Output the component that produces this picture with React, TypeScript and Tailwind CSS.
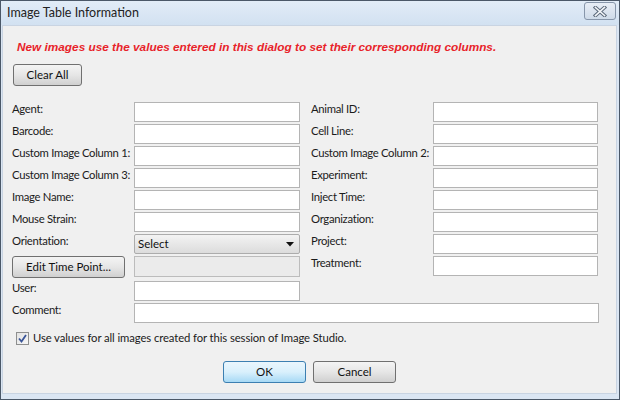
import React from 'react';

const ui = { fontFamily: 'Lato, "Noto Sans", sans-serif' };

const leftRows = [
  'Agent:',
  'Barcode:',
  'Custom Image Column 1:',
  'Custom Image Column 3:',
  'Image Name:',
  'Mouse Strain:',
];

const rightRows = [
  'Animal ID:',
  'Cell Line:',
  'Custom Image Column 2:',
  'Experiment:',
  'Inject Time:',
  'Organization:',
  'Project:',
  'Treatment:',
];

const TextBox = ({ w = 'w-[166px]' }: { w?: string }) => (
  <div className={`${w} h-[20px] bg-white border border-[#b4b4b4]`} />
);

const Label = ({ text }: { text: string }) => (
  <div className="w-[122px] h-[20px] text-[11.3px] tracking-[-0.3px] leading-[14px] text-[#1b1b1b] whitespace-nowrap">{text}</div>
);

const WinButton = ({ label, w, primary }: { label: string; w: string; primary?: boolean }) => (
  <div
    className={`${w} h-[22px] rounded-[3px] border flex items-center justify-center text-[11.5px] text-[#111] ${
      primary
        ? 'border-[#3c7fb1] bg-gradient-to-b from-[#eaf6fd] via-[#d9f0fc] to-[#a7d9f5]'
        : 'border-[#707070] bg-gradient-to-b from-[#f4f4f4] via-[#e6e6e6] to-[#d0d0d0]'
    }`}
  >
    {label}
  </div>
);

export default function App() {
  return (
    <div className="w-[620px] h-[400px] bg-[#dbe6f3] border border-[#4b5868] flex flex-col" style={ui}>
      {/* title bar */}
      <div className="h-[24px] flex items-center justify-between bg-gradient-to-b from-[#e2ecf7] to-[#d2e1f1] pl-[6px] pr-[3px] shrink-0">
        <span className="text-[12.5px] text-[#222]">Image Table Information</span>
        <div className="w-[32px] h-[18px] mt-[-4px] rounded-[3px] border border-[#8796aa] bg-gradient-to-b from-[#e8eef6] to-[#cfdbe9] flex items-center justify-center">
          <svg width="14" height="11" viewBox="0 0 14 11">
            <path d="M2.5 1.5 L11.5 9.5 M11.5 1.5 L2.5 9.5" stroke="#5d6b7c" strokeWidth="3.6" strokeLinecap="square" />
            <path d="M2.5 1.5 L11.5 9.5 M11.5 1.5 L2.5 9.5" stroke="#f4f6f9" strokeWidth="1.6" strokeLinecap="square" />
          </svg>
        </div>
      </div>

      {/* body */}
      <div className="flex-1 ml-[1px] mb-[5px] mr-[2px] bg-[#f0f0f0] border border-[#c9d4e2] pl-[9px] pt-[13px]">
        <div
          className="pl-[5px] text-[11.8px] leading-[16px] font-bold italic text-[#e8232a]"
          style={{ fontFamily: '"Liberation Sans", Arial, sans-serif' }}
        >
          New images use the values entered in this dialog to set their corresponding columns.
        </div>
        <div className="mt-[9px] ml-[1px]">
          <WinButton label="Clear All" w="w-[69px]" />
        </div>

        <div className="mt-[16px] flex">
          {/* left column */}
          <div className="flex flex-col w-[288px]">
            {leftRows.map((r) => (
              <div key={r} className="flex mb-[2px]">
                <Label text={r} />
                <TextBox />
              </div>
            ))}
            <div className="flex mb-[2px]">
              <Label text="Orientation:" />
              <div className="w-[166px] h-[20px] rounded-[2px] border border-[#acacac] bg-gradient-to-b from-[#f3f3f3] to-[#dcdcdc] flex items-center justify-between pl-[3px] pr-[5px] text-[11.5px] text-[#111]">
                <span>Select</span>
                <svg width="8" height="5" viewBox="0 0 8 5">
                  <path d="M0 0 H8 L4 4.5 Z" fill="#111" />
                </svg>
              </div>
            </div>
            <div className="flex mb-[3px]">
              <div className="w-[122px]">
                <WinButton label="Edit Time Point..." w="w-[113px]" />
              </div>
              <div className="w-[166px] h-[21px] bg-[#ebebeb] border border-[#bcbcbc]" />
            </div>
            <div className="flex">
              <Label text="User:" />
              <TextBox />
            </div>
          </div>

          {/* right column */}
          <div className="flex flex-col ml-[11px]">
            {rightRows.map((r) => (
              <div key={r} className="flex mb-[2px]">
                <Label text={r} />
                <TextBox w="w-[165px]" />
              </div>
            ))}
          </div>
        </div>

        <div className="flex mt-[2px]">
          <Label text="Comment:" />
          <TextBox w="w-[465px]" />
        </div>

        <div className="flex items-center mt-[7px] ml-[4px]">
          <div className="w-[13px] h-[13px] border border-[#8e8f8f] bg-gradient-to-br from-[#e3e3e3] to-[#f6f6f6] flex items-center justify-center">
            <svg width="9" height="9" viewBox="0 0 9 9">
              <path d="M1 4.5 L3.5 7.5 L8 1" stroke="#3a5598" strokeWidth="1.8" fill="none" />
            </svg>
          </div>
          <span className="ml-[4px] text-[11.3px] tracking-[-0.1px] text-[#1b1b1b]">
            Use values for all images created for this session of Image Studio.
          </span>
        </div>

        <div className="flex justify-center gap-[7px] mt-[14px] pr-[9px]">
          <WinButton label="OK" w="w-[83px]" primary />
          <WinButton label="Cancel" w="w-[83px]" />
        </div>
      </div>
    </div>
  );
}
